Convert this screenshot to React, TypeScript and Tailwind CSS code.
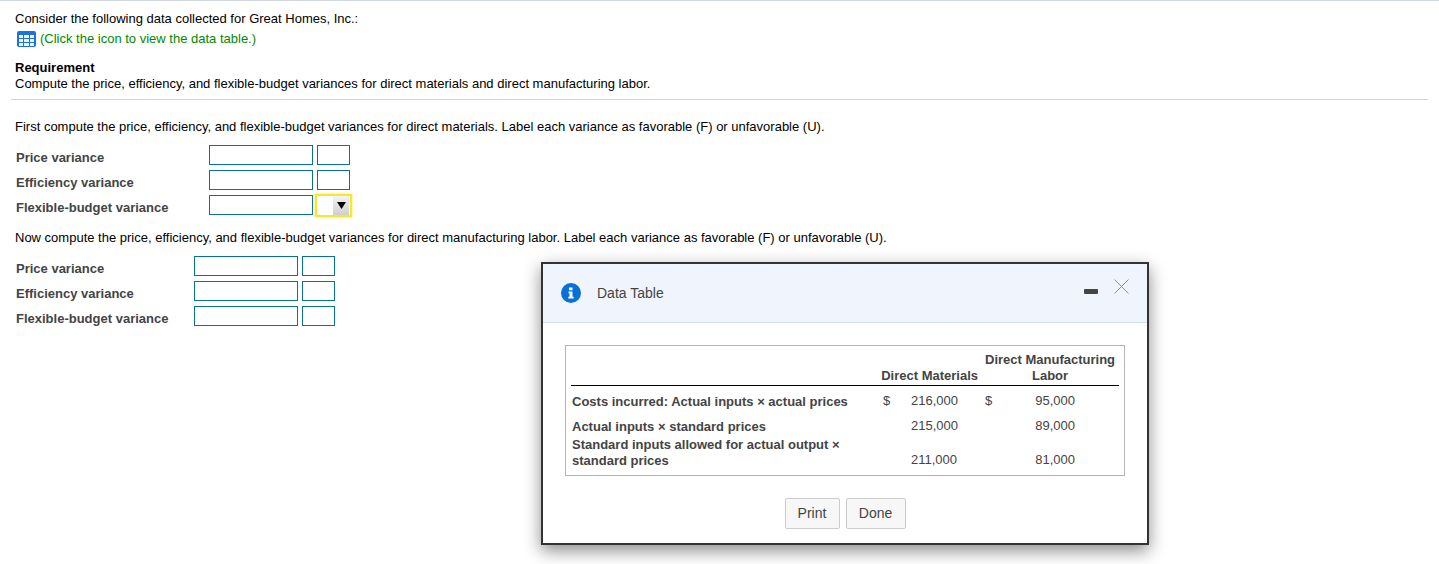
const labels = ["Price variance", "Efficiency variance", "Flexible-budget variance"];

function TableIcon() {
  return (
    <svg width="19" height="16" viewBox="0 0 19 16" aria-hidden="true">
      <rect width="19" height="16" rx="2" fill="#1a73e0" />
      <path
        d="M2 4h4v3H2zM7 4h5v3H7zM13 4h4v3h-4zM2 8h4v3H2zM7 8h5v3H7zM13 8h4v3h-4zM2 12h4v3H2zM7 12h5v3H7zM13 12h4v3h-4z"
        fill="#eef5fd"
      />
    </svg>
  );
}

function InfoIcon() {
  return (
    <svg width="20" height="20" viewBox="0 0 20 20" aria-hidden="true">
      <circle cx="10" cy="10" r="10" fill="#0a6fd6" />
      <path d="M8 4.500h3.500v2.700H8zM7.500 8.500h4v5.200h1.200v1.800H7.300v-1.800h1.200v-3.400h-1z" fill="#fff" />
    </svg>
  );
}

function VarianceForm({ labelWidth, select }: { labelWidth: string; select?: boolean }) {
  return (
    <div className="flex flex-col gap-[5px]">
      {labels.map((label, i) => (
        <div key={label} className="flex h-5 items-center">
          <span className={`pl-[1px] pt-[6px] font-bold text-[#444] ${labelWidth}`}>{label}</span>
          <div className="h-5 w-[104px] border border-[#0a7297] bg-white" />
          {select && i === 2 ? (
            <div className="ml-[2px] flex h-[23px] w-[37px] items-center justify-end border-2 border-[#f6e53c] bg-white pr-[1px] shadow-[0_0_3px_#f6e53c]">
              <div className="flex h-[19px] w-4 items-center justify-center bg-gradient-to-b from-[#f4f4f4] to-[#cfcfcf]">
                <svg width="9" height="7" viewBox="0 0 9 7" aria-hidden="true">
                  <path d="M0 0h9L4.500 7z" fill="#000" />
                </svg>
              </div>
            </div>
          ) : (
            <div className="ml-1 h-5 w-[33px] border border-[#0a7297] bg-white" />
          )}
        </div>
      ))}
    </div>
  );
}

function DataTable() {
  return (
    <div className="border border-[#b5b5b5] px-[5px] pb-[6px] pt-[6px] text-[#444]">
      <table className="w-[548px] table-fixed border-collapse text-[13px] leading-4">
        <colgroup>
          <col className="w-[309px]" />
          <col className="w-[25px]" />
          <col className="w-[53px]" />
          <col className="w-[20px]" />
          <col className="w-[27px]" />
          <col className="w-[70px]" />
          <col className="w-[44px]" />
        </colgroup>
        <thead>
          <tr className="border-b border-black">
            <th />
            <th colSpan={3} className="whitespace-nowrap pb-[1px] text-right align-bottom font-bold">
              Direct Materials
            </th>
            <th colSpan={3} className="whitespace-nowrap pb-[1px] pl-[7px] pr-1 text-center align-bottom font-bold">
              Direct Manufacturing
              <br />
              Labor
            </th>
          </tr>
        </thead>
        <tbody>
          <tr className="h-[31px]">
            <td className="pl-[1px] pt-[2px] font-bold">Costs incurred: Actual inputs × actual prices</td>
            <td className="pl-[3px]">$</td>
            <td className="text-right">216,000</td>
            <td />
            <td className="pl-[7px]">$</td>
            <td className="text-right">95,000</td>
            <td />
          </tr>
          <tr className="h-5">
            <td className="pl-[1px] pt-[1px] font-bold">Actual inputs × standard prices</td>
            <td />
            <td className="pb-[2px] text-right">215,000</td>
            <td />
            <td />
            <td className="pb-[2px] text-right">89,000</td>
            <td />
          </tr>
          <tr>
            <td className="pl-[1px] font-bold">
              Standard inputs allowed for actual output ×
              <br />
              standard prices
            </td>
            <td />
            <td className="pb-[1px] pr-[1px] text-right align-bottom">211,000</td>
            <td />
            <td />
            <td className="pb-[1px] text-right align-bottom">81,000</td>
            <td />
          </tr>
        </tbody>
      </table>
    </div>
  );
}

export default function App() {
  return (
    <div className="relative h-[564px] overflow-hidden border-t border-[#d0d6e4] bg-white font-['Liberation_Sans',Arial,sans-serif] text-[13px] leading-4 text-black">
      <div className="mx-[11px] border-b border-[#d2d2d6] pb-[7px] pl-1 pt-[10px]">
        <p>Consider the following data collected for Great Homes, Inc.:</p>
        <div className="mt-[3px] flex h-[18px] items-center gap-1 pl-[2px] text-[#008a00]">
          <TableIcon />
          <span>(Click the icon to view the data table.)</span>
        </div>
        <p className="mt-[12px] font-bold">Requirement</p>
        <p>Compute the price, efficiency, and flexible-budget variances for direct materials and direct manufacturing labor.</p>
      </div>

      <div className="px-[15px]">
        <p className="mt-[19px]">
          First compute the price, efficiency, and flexible-budget variances for direct materials. Label each variance as favorable (F) or unfavorable (U).
        </p>
        <div className="mt-[10px]">
          <VarianceForm labelWidth="w-[194px]" select />
        </div>
        <p className="mt-[15px]">
          Now compute the price, efficiency, and flexible-budget variances for direct manufacturing labor. Label each variance as favorable (F) or unfavorable (U).
        </p>
        <div className="mt-[10px]">
          <VarianceForm labelWidth="w-[179px]" />
        </div>
      </div>

      {/* dialog sits over the page */}
      <div className="absolute left-[541px] top-[261px] h-[283px] w-[608px] border-2 border-[#333] bg-white shadow-[0_6px_16px_rgba(0,0,0,0.45)]">
        <div className="flex h-[59px] items-center border-b border-[#cde0f0] bg-[#f0f5fd] pl-[18px] pr-[18px]">
          <InfoIcon />
          <span className="ml-4 text-[14px] text-[#444]">Data Table</span>
          <div className="ml-auto flex gap-4 self-start">
            <svg className="mt-[25px]" width="14" height="5" viewBox="0 0 14 5" aria-hidden="true">
              <rect width="14" height="5" rx="1" fill="#444" />
            </svg>
            <svg className="mt-[15px]" width="15" height="15" viewBox="0 0 15 15" aria-hidden="true">
              <path d="M0.500 0.500l14 14M14.500 0.500l-14 14" stroke="#777" strokeWidth="0.800" fill="none" />
            </svg>
          </div>
        </div>
        <div className="mx-[22px] mt-[22px]">
          <DataTable />
        </div>
        <div className="mt-[22px] flex justify-center gap-[6px] text-[14px] text-[#444]">
          <button className="h-[31px] w-[55px] rounded-[2px] border border-[#ccc] bg-[#f7f7f7]">Print</button>
          <button className="h-[31px] w-[60px] rounded-[2px] border border-[#ccc] bg-[#f7f7f7]">Done</button>
        </div>
      </div>
    </div>
  );
}
